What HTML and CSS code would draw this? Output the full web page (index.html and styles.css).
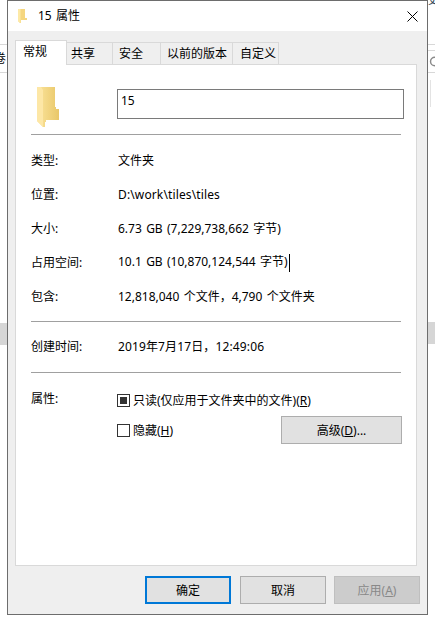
FILE: index.html
```html
<!DOCTYPE html>
<html lang="zh-CN">
<head>
<meta charset="utf-8">
<title>15 属性</title>
<link rel="stylesheet" href="styles.css">
</head>
<body>
<div class="backdrop left">
  <div class="bd-line l1"></div>
  <div class="bd-text">卷</div>
  <div class="bd-line l2"></div>
  <div class="bd-band"></div>
</div>
<div class="window">
  <header class="titlebar">
    <svg class="title-icon" width="10" height="14" viewBox="0 0 10 14"><path d="M0 0h7v9h2v2H3v3H2L0 12z" fill="#f5d67f"/><path d="M0 0h2.500v14H2L0 12z" fill="#fde9a6"/></svg>
    <span class="title-text">15 属性</span>
    <svg class="close" width="11" height="11" viewBox="0 0 11 11"><path d="M.5.500l10 10M10.500.500l-10 10" stroke="#000" stroke-width="1" fill="none"/></svg>
  </header>
  <div class="body">
    <nav class="tabs">
      <div class="tab active">常规</div>
      <div class="tab t2">共享</div>
      <div class="tab t3">安全</div>
      <div class="tab t4">以前的版本</div>
      <div class="tab t5">自定义</div>
    </nav>
    <main class="panel">
      <div class="name-row">
        <svg class="folder" width="22" height="40" viewBox="0 0 22 40">
          <defs><linearGradient id="fg" x1="0" x2="1" y1="0" y2="0"><stop offset="0" stop-color="#fbe49c"/><stop offset="1" stop-color="#e9c768"/></linearGradient></defs>
          <path d="M0 0h18v20h1v2h3v11H9v2H8v5H6L0 34z" fill="url(#fg)"/>
          <path d="M0 0h4l2 3v37L0 34z" fill="#fde7a6"/>
        </svg>
        <div class="name-input">15</div>
      </div>
      <div class="rule"></div>
      <div class="info">
        <div class="row"><span class="k">类型:</span><span class="v">文件夹</span></div>
        <div class="row"><span class="k">位置:</span><span class="v wide">D:\work\tiles\tiles</span></div>
        <div class="row"><span class="k">大小:</span><span class="v">6.73 GB (7,229,738,662 字节)</span></div>
        <div class="row"><span class="k">占用空间:</span><span class="v">10.1 GB (10,870,124,544 字节)<span class="caret"></span></span></div>
        <div class="row"><span class="k">包含:</span><span class="v">12,818,040 个文件，4,790 个文件夹</span></div>
      </div>
      <div class="rule r2"></div>
      <div class="row created"><span class="k">创建时间:</span><span class="v wide">2019年7月17日，12:49:06</span></div>
      <div class="rule"></div>
      <div class="attrs">
        <span class="k attr-key">属性:</span>
        <div class="attr-body">
          <label class="check"><span class="box on"></span>只读(仅应用于文件夹中的文件)(<u>R</u>)</label>
          <div class="attr-line">
            <label class="check"><span class="box"></span>隐藏(<u>H</u>)</label>
            <button class="btn adv">高级(<u>D</u>)...</button>
          </div>
        </div>
      </div>
    </main>
    <footer class="actions">
      <button class="btn action primary">确定</button>
      <button class="btn action">取消</button>
      <button class="btn action disabled">应用(<u>A</u>)</button>
    </footer>
  </div>
</div>
<div class="backdrop right">
  <div class="bd-top">史</div>
  <div class="bd-line r-l1"></div>
  <div class="bd-line r-l2"></div>
  <svg class="bd-glyph" width="7" height="22" viewBox="0 0 7 22"><circle cx="7" cy="11" r="4.500" fill="none" stroke="#8a8a8a" stroke-width="1.500"/></svg>
  <div class="bd-line r-l3"></div>
  <div class="bd-vline"></div>
  <div class="bd-band r-band"></div>
</div>
</body>
</html>
```
FILE: styles.css
```css
* { box-sizing: border-box; }
html, body { margin: 0; height: 100%; }
body {
  width: 435px; height: 622px; overflow: hidden; background: #fff; display: flex;
  font-family: "Noto Sans", "Noto Sans CJK SC", sans-serif; font-size: 12px; line-height: 16px; color: #000; word-spacing: 1.2px;
}
.backdrop { flex: none; width: 7px; height: 100%; overflow: hidden; }
.left { background: #fff; }
.bd-line { height: 1px; background: #d8d8d8; }
.l1 { margin-top: 44px; }
.bd-text { height: 27px; line-height: 27px; margin-left: -6px; }
.bd-band { height: 22px; background: #d6d6d6; margin-top: 250px; }
.bd-top { height: 16px; margin-top: -8px; color: #345; }
.r-l1 { margin-top: 36px; }
.r-l2 { margin-top: 5px; }
.bd-glyph { display: block; height: 21px; }
.r-l3 { margin-top: 0; }
.bd-vline { width: 1px; height: 27px; margin: 7px 0 0 2px; background: #e3e3e3; }
.r-band { margin-top: 215px; }
.window {
  flex: none; width: 421px; height: 615px; background: #efefef;
  border: 1px solid #6d6d6d; display: flex; flex-direction: column;
}
.titlebar { flex: none; height: 30px; background: #fff; display: flex; align-items: center; padding: 0 9px 0 10px; }
.title-icon { flex: none; }
.title-text { margin-left: 10px; }
.close { margin-left: auto; }
.body { flex: 1; display: flex; flex-direction: column; padding: 9px 7px 0; min-height: 0; }
.tabs { flex: none; display: flex; height: 24px; position: relative; z-index: 1; align-items: flex-end; }
.tab {
  height: 22px; border: 1px solid #d9d9d9; border-bottom: 0; border-left: 0; background: #efefef;
  display: flex; align-items: center; padding-left: 6px; white-space: nowrap;
}
.tab.active { height: 25px; margin-bottom: -1px; width: 52px; background: #fff; border-left: 1px solid #d9d9d9; padding: 0 0 2px 7px; }
.t2 { width: 46px; padding-left: 4px; }
.t3 { width: 48px; }
.t4 { width: 72px; }
.t5 { width: 46px; padding-left: 7px; }
.panel {
  flex: none; width: 402px; height: 502px; background: #fff; border: 1px solid #d9d9d9; padding: 0 15px;
}
.name-row { display: flex; align-items: flex-start; height: 69px; padding: 22px 0 0 6px; }
.folder { flex: none; }
.name-input {
  flex: none; width: 287px; height: 30px; margin: 2px 0 0 58px; border: 1px solid #7a7a7a; padding: 3px 3px;
}
.rule { height: 1px; background: #a0a0a0; }
.info { padding-top: 9px; }
.row { display: flex; height: 34px; align-items: center; }
.k { flex: none; width: 87px; }
.v { white-space: nowrap; }
.wide { letter-spacing: .13px; }
.caret { display: inline-block; width: 1px; height: 18px; background: #000; vertical-align: middle; margin-left: 1px; }
.r2 { margin-top: 7px; }
.created { height: 50px; }
.attrs { display: flex; padding-top: 17px; }
.attr-key { margin-top: 1px; }
.attr-body { flex: 1; }
.check { display: flex; align-items: center; height: 20px; padding-top: 1px; white-space: nowrap; margin-left: -1px; }
.box { width: 13px; height: 13px; border: 1px solid #333; margin: -1px 3px 0 0; flex: none; background: #fff; }
.box.on { box-shadow: inset 0 0 0 2px #fff; background: #333; }
.attr-line { display: flex; justify-content: space-between; align-items: center; margin: 6px -1px 0 0; }
.btn {
  font: inherit; color: #000; background: #e1e1e1; border: 1px solid #adadad; padding: 1px 0 0; display: flex; align-items: center; justify-content: center;
}
.adv { width: 121px; height: 28px; }
.actions { flex: 1; display: flex; justify-content: flex-end; align-items: flex-start; gap: 8px; padding-top: 10px; }
.action { width: 86px; height: 28px; }
.primary { border: 2px solid #0078d7; margin-right: 1px; }
.disabled { background: #ccc; border-color: #bfbfbf; color: #888; }
```
